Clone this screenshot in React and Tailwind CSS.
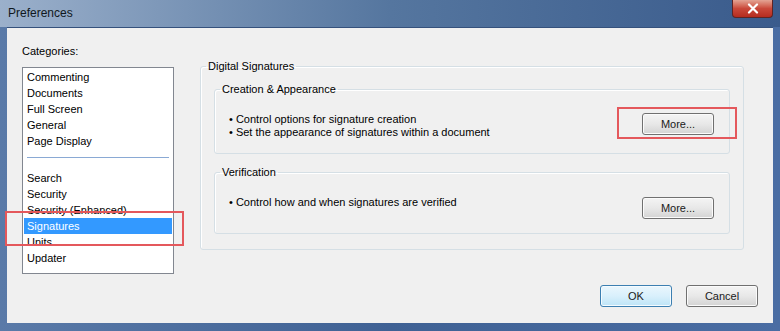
const categoriesTop = ["Commenting", "Documents", "Full Screen", "General", "Page Display"];
const categoriesBottom = ["Search", "Security", "Security (Enhanced)", "Signatures", "Units", "Updater"];

const WinButton = ({ children, primary }) => (
  <button
    className={
      primary
        ? "w-[72px] h-[22px] rounded-[3px] border border-[#3c7fb1] bg-linear-to-b from-[#eaf6fd] via-[#d9f0fc] to-[#bde4f7] shadow-[inset_0_0_0_1px_#f4fbff] text-[11px] text-[#1a1a1a]"
        : "w-[72px] h-[22px] rounded-[3px] border border-[#707070] bg-linear-to-b from-[#f4f4f4] via-[#e8e8e8] to-[#d3d3d3] shadow-[inset_0_0_0_1px_#fbfbfb] text-[11px] text-[#1a1a1a]"
    }
  >
    {children}
  </button>
);

const GroupBox = ({ label, className, children }) => (
  <fieldset className={"border border-[#d5dfe5] rounded-[3px] shadow-[inset_1px_1px_0_#fff] " + className}>
    <legend className="ml-[5px] px-[2px] leading-[16px] text-[11px]">{label}</legend>
    {children}
  </fieldset>
);

const App = () => {
  const selected = "Signatures";

  return (
    <div
      className="relative w-[780px] h-[331px] flex flex-col bg-linear-to-r from-[#5a7aa8] via-[#3f6194] to-[#4a6da3] text-black"
      style={{ fontFamily: '"Liberation Sans", Arial, sans-serif' }}
    >
      {/* title bar */}
      <div className="h-[27px] flex items-start justify-between bg-linear-to-r from-[#9bb0cb] via-[#55769f] to-[#3a5b8c]">
        <span className="ml-[8px] mt-[6px] text-[12px] leading-[14px] text-[#101820]">Preferences</span>
        <div className="mr-[7px] w-[41px] h-[18px] flex items-center justify-center rounded-b-[4px] border border-t-0 border-[#5e2424] bg-linear-to-b from-[#e3a394] via-[#c9483a] to-[#b52b1f]">
          <svg width="12" height="11" viewBox="0 0 12 11">
            <path d="M2 1.5 L10 9.5 M10 1.5 L2 9.5" stroke="#fff" strokeWidth="2.2" strokeLinecap="round" />
          </svg>
        </div>
      </div>

      {/* client area */}
      <div className="mx-[7px] mb-[8px] flex-1 flex flex-col bg-[#f0f0f0] border-t border-[#35517c]">
        <div className="flex items-start pt-[15px] pl-[15px]">
          <div className="flex flex-col">
            <span className="text-[11px] leading-[16px]">Categories:</span>
            <div className="mt-[8px] w-[152px] h-[207px] border border-[#828790] bg-white pt-[1px] text-[11px]">
              {categoriesTop.map((c) => (
                <div key={c} className="mx-[1px] px-[3px] h-[16px] leading-[16px]">
                  {c}
                </div>
              ))}
              <div className="mx-[4px] mt-[8px] mb-[12px] h-px bg-[#8aa9d4]" />
              {categoriesBottom.map((c) => (
                <div
                  key={c}
                  className={
                    c === selected
                      ? "mx-[1px] px-[3px] h-[16px] leading-[16px] bg-[#3399ff] text-white"
                      : "mx-[1px] px-[3px] h-[16px] leading-[16px]"
                  }
                >
                  {c}
                </div>
              ))}
            </div>
          </div>

          <GroupBox label="Digital Signatures" className="ml-[26px] mt-[15px] w-[544px] h-[192px]">
            <div className="px-[13px] pt-[7px] flex flex-col gap-[10px]">
              <GroupBox label="Creation & Appearance">
                <div className="h-[56px] flex items-start justify-between pt-[16px] pl-[14px] pr-[15px] text-[11px] leading-[13px]">
                  <div>
                    <div>• Control options for signature creation</div>
                    <div>• Set the appearance of signatures within a document</div>
                  </div>
                  <WinButton>More...</WinButton>
                </div>
              </GroupBox>
              <GroupBox label="Verification">
                <div className="h-[53px] flex items-start justify-between pt-[16px] pl-[14px] pr-[15px] text-[11px] leading-[13px]">
                  <div>• Control how and when signatures are verified</div>
                  <div className="mt-[1px]">
                    <WinButton>More...</WinButton>
                  </div>
                </div>
              </GroupBox>
            </div>
          </GroupBox>
        </div>

        <div className="mt-auto flex justify-end gap-[14px] pr-[15px] pb-[16px]">
          <WinButton primary>OK</WinButton>
          <WinButton>Cancel</WinButton>
        </div>
      </div>

      {/* highlight marks */}
      <div className="absolute left-[5px] top-[211px] w-[179px] h-[35px] border-2 border-[#e4585c]" />
      <div className="absolute left-[617px] top-[107px] w-[120px] h-[32px] border-2 border-[#e4585c]" />
    </div>
  );
};

export default App;
